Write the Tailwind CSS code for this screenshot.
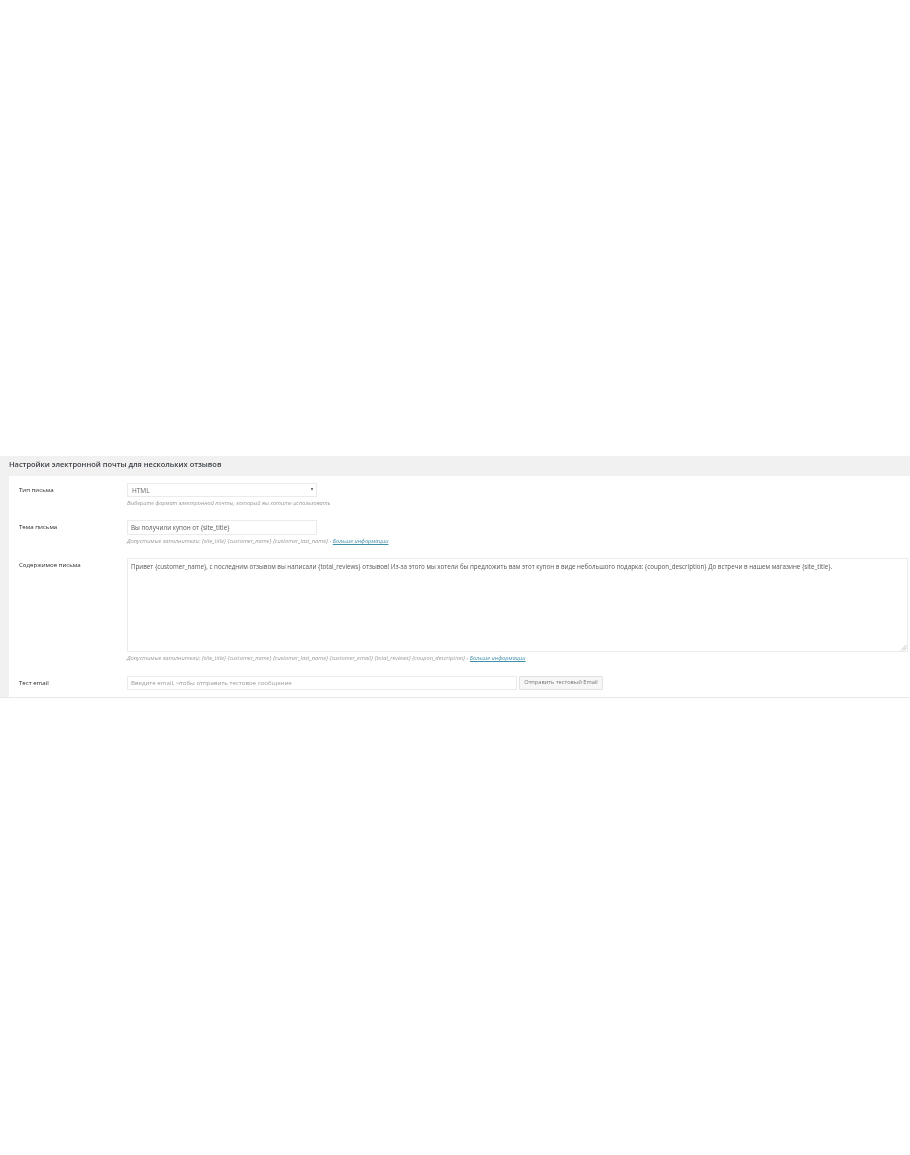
<!doctype html>
<html lang="ru">
<head>
<meta charset="utf-8">
<script src="https://cdn.jsdelivr.net/npm/@tailwindcss/browser@4"></script>
</head>
<body class="bg-white font-['Open_Sans',sans-serif] text-[#444]">
  <div class="h-[1155px] pt-[456px] overflow-hidden">
    <!--Settings section-->
    <section class="bg-[#f1f1f1] border-b border-[#e8e8e8] h-[242px] flex flex-col">
      <h2 class="h-5 pl-[9px] text-[7.45px] leading-[17px] font-semibold text-[#3a3f44] blur-[0.3px]">Настройки электронной почты для нескольких отзывов</h2>
      <div class="ml-[9px] flex-1 bg-white pl-2.5 pt-[7px] blur-[0.35px]">
        <!--Type-->
        <div class="flex h-[37px]">
          <label class="w-[108px] text-[6.1px] leading-[14px] font-medium text-[#23282d]">Тип письма</label>
          <div>
            <div class="w-[190px] h-[14px] bg-white border border-[#ebebeb] flex items-center justify-between pl-[4px] pr-[3px] text-[6.5px] text-[#666]">
              <span class="pt-[2px]">HTML</span>
              <span class="w-0 h-0 border-x-[1.5px] border-x-transparent border-t-[3px] border-t-[#444] mb-[2px]"></span>
            </div>
            <p class="mt-[2px] text-[5.55px] leading-[8px] italic text-[#999]">Выберите формат электронной почты, который вы хотите использовать</p>
          </div>
        </div>
        <!--Subject-->
        <div class="flex h-[38px]">
          <label class="w-[108px] text-[6.1px] leading-[14px] font-medium text-[#23282d]">Тема письма</label>
          <div>
            <div class="w-[190px] h-[15px] bg-white border border-[#ebebeb] flex items-center pl-[3px] text-[6.25px] text-[#555]">Вы получили купон от {site_title}</div>
            <p class="mt-[2px] text-[5.7px] leading-[8px] italic text-[#999]">Допустимые заполнители: {site_title} {customer_name} {customer_last_name} - <a class="text-[#3f8fa8] underline">Больше информации</a></p>
          </div>
        </div>
        <!--Body-->
        <div class="flex h-[118px]">
          <label class="w-[108px] text-[6.1px] leading-[14px] font-medium text-[#23282d]">Содержимое письма</label>
          <div class="flex-1">
            <div class="relative w-[781px] h-[94px] bg-white border border-[#ebebeb] pl-[3px] pt-[3px] text-[6.22px] leading-[10px] text-[#555] whitespace-nowrap">
              Привет {customer_name}, с последним отзывом вы написали {total_reviews} отзывов! Из-за этого мы хотели бы предложить вам этот купон в виде небольшого подарка: {coupon_description} До встречи в нашем магазине {site_title}.
              <svg class="absolute right-0 bottom-0" width="7" height="7" viewBox="0 0 7 7" stroke="#aaa" stroke-width="0.7"><path d="M1 6.5 6.5 1M3.5 6.5 6.5 3.5"/></svg>
            </div>
            <p class="mt-[2px] text-[5.7px] leading-[8px] italic text-[#999]">Допустимые заполнители: {site_title} {customer_name} {customer_last_name} {customer_email} {total_reviews} {coupon_description} - <a class="text-[#3f8fa8] underline">Больше информации</a></p>
          </div>
        </div>
        <!--Test email-->
        <div class="flex">
          <label class="w-[108px] text-[6.1px] leading-[14px] font-medium text-[#23282d]">Тест email</label>
          <div class="flex gap-0.5">
            <div class="w-[390px] h-[14px] bg-white border border-[#ebebeb] flex items-center pl-[3px] text-[6.15px] text-[#999]">Введите email, чтобы отправить тестовое сообщение</div>
            <button class="w-[84px] h-[14px] bg-[#f7f7f7] border border-[#e2e2e2] rounded-[1px] text-[5.7px] leading-none text-[#777]">Отправить тестовый Email</button>
          </div>
        </div>
      </div>
    </section>
  </div>
</body>
</html>
